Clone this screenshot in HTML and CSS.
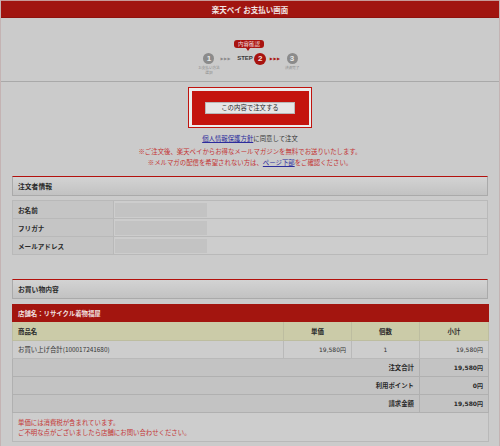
FILE: index.html
```html
<!DOCTYPE html>
<html lang="ja">
<head>
<meta charset="utf-8">
<title>楽天ペイ お支払い画面</title>
<link rel="stylesheet" href="styles.css">
</head>
<body>
<div class="page">
  <header class="topbar">楽天ペイ お支払い画面</header>

  <section class="steps">
    <div class="badge">内容確認</div>
    <div class="step-row">
      <div class="step">
        <span class="num">1</span>
        <span class="step-label">お支払い方法<br>選択</span>
      </div>
      <span class="arrows">▶▶▶</span>
      <span class="step-word">STEP</span>
      <div class="step">
        <span class="num current">2</span>
      </div>
      <span class="arrows red">▶▶▶</span>
      <div class="step">
        <span class="num">3</span>
        <span class="step-label">決済完了</span>
      </div>
    </div>
  </section>

  <section class="confirm">
    <div class="order-frame">
      <div class="order-fill">
        <button class="order-btn" type="button">この内容で注文する</button>
      </div>
    </div>
    <p class="agree"><a href="#" class="link">個人情報保護方針</a>に同意して注文</p>
    <p class="note">※ご注文後、楽天ペイからお得なメールマガジンを無料でお送りいたします。</p>
    <p class="note">※メルマガの配信を希望されない方は、<a href="#" class="link">ページ下部</a>をご確認ください。</p>
  </section>

  <section class="block">
    <h2 class="block-head">注文者情報</h2>
    <table class="info">
      <tr><th>お名前</th><td><span class="mask"></span></td></tr>
      <tr><th>フリガナ</th><td><span class="mask"></span></td></tr>
      <tr><th>メールアドレス</th><td><span class="mask"></span></td></tr>
    </table>
  </section>

  <section class="block block2">
    <h2 class="block-head">お買い物内容</h2>
    <table class="items">
      <colgroup>
        <col class="c-name"><col class="c-price"><col class="c-qty"><col class="c-sub">
      </colgroup>
      <tr class="shop"><th colspan="4">店舗名：リサイクル着物福屋</th></tr>
      <tr class="cols">
        <th class="left">商品名</th><th>単価</th><th>個数</th><th>小計</th>
      </tr>
      <tr class="item">
        <td>お買い上げ合計(100017241680)</td>
        <td class="num-r">19,580円</td>
        <td class="center">1</td>
        <td class="num-r">19,580円</td>
      </tr>
      <tr class="sum"><th colspan="3">注文合計</th><td>19,580円</td></tr>
      <tr class="sum"><th colspan="3">利用ポイント</th><td>0円</td></tr>
      <tr class="sum"><th colspan="3">請求金額</th><td>19,580円</td></tr>
      <tr class="foot">
        <td colspan="4">単価には消費税が含まれています。<br>ご不明な点がございましたら店舗にお問い合わせください。</td>
      </tr>
    </table>
  </section>
</div>
</body>
</html>
```

FILE: styles.css
```css
* { box-sizing: border-box; }
html, body { margin: 0; padding: 0; }
body {
  background: #cbcbcb;
  font-family: "DejaVu Sans", "Noto Sans CJK JP", sans-serif;
  font-size: 6.5px;
  color: #2a2a2a;
}
.page {
  width: 500px;
  height: 446px;
  overflow: hidden;
  border-left: 1px solid #c4b3b3;
  border-right: 1px solid #c4b3b3;
  background: #cbcbcb;
}
.topbar {
  height: 18px;
  border-top: 1px solid #c79a98;
  border-bottom: 1px solid #8e120e;
  background: #a11510;
  color: #f2e6e6;
  font-family: "Noto Sans CJK JP", sans-serif;
  font-weight: bold;
  font-size: 7.5px;
  display: flex;
  align-items: center;
  justify-content: center;
}

/* steps */
.steps {
  height: 64px;
  border-bottom: 1px solid #a9a9a9;
  display: flex;
  flex-direction: column;
  align-items: center;
  padding-top: 22px;
}
.badge {
  position: relative;
  background: #a8130f;
  color: #f0dede;
  font-family: "Noto Sans CJK JP", sans-serif;
  font-size: 5.5px;
  line-height: 8px;
  padding: 0 4px;
  border-radius: 3px;
  margin-left: -2px;
}
.badge::after {
  content: "";
  position: absolute;
  left: 12px;
  top: 8px;
  border-left: 2px solid transparent;
  border-right: 2px solid transparent;
  border-top: 3px solid #a8130f;
}
.step-row {
  display: flex;
  align-items: flex-start;
  margin-top: 5px;
  margin-left: 1px;
}
.step {
  width: 11px;
  display: flex;
  flex-direction: column;
  align-items: center;
}
.num {
  width: 11px;
  height: 11px;
  border-radius: 50%;
  background: #8b8b8b;
  color: #e8e8e8;
  font-weight: bold;
  font-size: 8px;
  line-height: 11px;
  text-align: center;
  font-family: "Liberation Sans", sans-serif;
}
.num.current {
  width: 12px;
  height: 12px;
  line-height: 12px;
  margin-top: -0.5px;
  background: #a8130f;
  color: #f4e4e4;
  box-shadow: 0 0 0 0.5px #c8c8c8;
}
.step-label {
  white-space: nowrap;
  text-align: center;
  font-family: "Noto Sans CJK JP", sans-serif;
  font-size: 3.6px;
  line-height: 5px;
  color: #8a8a8a;
  margin-top: 1px;
}
.arrows {
  font-size: 4px;
  line-height: 11px;
  color: #8b8b8b;
  letter-spacing: 0.5px;
  margin: 0 6px 0 6px;
}
.arrows.red { color: #a8130f; margin: 0 6px 0 4px; }
.step-word {
  font-family: "Liberation Sans", sans-serif;
  font-weight: bold;
  font-size: 6px;
  line-height: 11px;
  color: #3a3a3a;
  margin-right: 2px;
}

/* confirm */
.confirm {
  height: 94px;
  display: flex;
  flex-direction: column;
  align-items: center;
  padding-top: 5px;
  font-family: "Noto Sans CJK JP", sans-serif;
  font-size: 6.4px;
}
.order-frame {
  width: 124px;
  height: 41px;
  border: 1.5px solid #c0130e;
  padding: 2.5px;
  background: #ececec;
}
.order-fill {
  height: 100%;
  background: #c4140e;
  display: flex;
  align-items: center;
  justify-content: center;
}
.order-btn {
  width: 90px;
  height: 12px;
  padding: 0;
  margin: 0;
  border: 1px solid #b8b8b8;
  background: #e6e6e6;
  font-family: "Noto Sans CJK JP", sans-serif;
  font-size: 6.4px;
  color: #2a2a2a;
  line-height: 10px;
}
.agree {
  margin: 7px 0 0 0;
  line-height: 8px;
  color: #333;
}
.link { color: #2c2c9c; text-decoration: underline; }
.note {
  margin: 0;
  line-height: 11px;
  color: #c43434;
}
.agree + .note { margin-top: 3px; }

/* blocks */
.block {
  padding: 0 11px 0 11px;
}
.block2 { margin-top: 24px; }
.block-head {
  margin: 0;
  height: 20px;
  border-top: 1.5px solid #b3110d;
  border-left: 1px solid #aaaaaa;
  border-right: 1px solid #aaaaaa;
  border-bottom: 1px solid #aaaaaa;
  background: linear-gradient(#d3d3d3, #c2c2c2);
  font-family: "Noto Sans CJK JP", sans-serif;
  font-size: 6.8px;
  font-weight: bold;
  color: #2a2a2a;
  line-height: 18px;
  padding-left: 5px;
}
table {
  width: 100%;
  border-collapse: collapse;
  table-layout: fixed;
  font-family: "Noto Sans CJK JP", sans-serif;
  font-size: 6.4px;
}
.info {
  margin-top: 4px;
  border: 1px solid #b6b6b6;
}
.info th, .info td {
  height: 18px;
  border: 1px solid #b9b9b9;
  padding: 0 5px;
  text-align: left;
}
.info th {
  width: 101px;
  background: #c5c5c5;
  font-weight: bold;
  font-size: 6.6px;
}
.info td {
  background: #cdcdcd;
  padding: 1px 1px;
}
.mask {
  display: block;
  width: 92px;
  height: 14px;
  background: #c3c3c3;
}

.items {
  margin-top: 5px;
  border: 1px solid #b6b6b6;
}
.c-name { width: 271px; }
.c-price { width: 68px; }
.c-qty { width: 68px; }
.c-sub { width: 69px; }
.items th, .items td {
  border: 1px solid #b9b9b9;
  padding: 0 5px;
  height: 18px;
}
.items .shop th {
  background: #a3150f;
  color: #f0e0e0;
  text-align: left;
  font-weight: bold;
  height: 17px;
  border-color: #a3150f;
}
.items .cols th {
  background: #cbcba8;
  font-weight: bold;
  text-align: center;
  height: 19px;
  border-color: #bdbda0;
}
.items .cols th.left { text-align: left; }
.items .item td {
  background: #cdcdcd;
  font-family: "DejaVu Sans", "Noto Sans CJK JP", sans-serif;
  font-size: 6px;
  color: #333;
}
.items .item td:first-child { font-family: "Noto Sans CJK JP", sans-serif; font-size: 6.4px; }
.num-r { text-align: right; }
.center { text-align: center; }
.items .sum th, .items .sum td {
  background: #c3c3c3;
  text-align: right;
  font-weight: bold;
  border-color: #b0b0b0;
}
.items .sum td {
  font-family: "DejaVu Sans", "Noto Sans CJK JP", sans-serif;
  font-size: 6px;
}
.items .foot td {
  background: #cdcdcd;
  color: #c43434;
  height: 29px;
  line-height: 10px;
  padding-top: 2px;
}
```
